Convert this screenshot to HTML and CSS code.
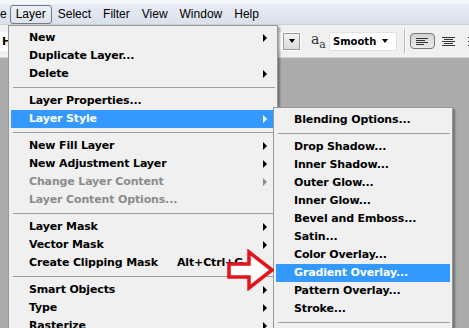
FILE: index.html
```html
<!DOCTYPE html>
<html lang="en">
<head>
  <meta charset="UTF-8">
  <title>Layer menu</title>
  <link rel="stylesheet" href="styles.css">
</head>
<body>
  <div class="app">
    <div class="titlebar"></div>
    <div class="menubar">
      <span class="mb-item cut">e</span>
      <span class="mb-item active">Layer</span>
      <span class="mb-item">Select</span>
      <span class="mb-item">Filter</span>
      <span class="mb-item">View</span>
      <span class="mb-item">Window</span>
      <span class="mb-item">Help</span>
    </div>
    <div class="toolbar">
      <div class="tool-box">H</div>
      <div class="spacer"></div>
      <div class="size-select">
        <span class="drop-btn"><i class="caret"></i></span>
      </div>
      <div class="aa">a<sub>a</sub></div>
      <div class="smooth-select">
        <span>Smooth</span>
        <i class="caret"></i>
      </div>
      <div class="tool-sep"></div>
      <div class="align-btn pressed">
        <svg width="17" height="9" viewBox="0 0 17 9"><path d="M2 1.5h12M2 3.5h9M2 5.5h12M2 7.5h8" stroke="#333" stroke-width="1"/></svg>
      </div>
      <div class="align-btn">
        <svg width="17" height="11" viewBox="0 0 17 11"><path d="M2 1.5h13M4 3.5h9M2 5.5h13M4 7.5h9M2 9.5h13" stroke="#333" stroke-width="1"/></svg>
      </div>
      <div class="align-btn">
        <svg width="17" height="11" viewBox="0 0 17 11"><path d="M2 1.5h13M6 3.5h9M2 5.5h13M6 7.5h9M2 9.5h13" stroke="#333" stroke-width="1"/></svg>
      </div>
    </div>
    <div class="workspace"></div>
  </div>

  <div class="menu main-menu">
    <div class="row sub">New</div>
    <div class="row">Duplicate Layer...</div>
    <div class="row sub">Delete</div>
    <div class="sep"></div>
    <div class="row">Layer Properties...</div>
    <div class="row sub selected">Layer Style</div>
    <div class="sep"></div>
    <div class="row sub">New Fill Layer</div>
    <div class="row sub">New Adjustment Layer</div>
    <div class="row sub disabled">Change Layer Content</div>
    <div class="row disabled">Layer Content Options...</div>
    <div class="sep"></div>
    <div class="row sub">Layer Mask</div>
    <div class="row sub">Vector Mask</div>
    <div class="row">Create Clipping Mask<span class="shortcut">Alt+Ctrl+G</span></div>
    <div class="sep"></div>
    <div class="row sub">Smart Objects</div>
    <div class="row sub">Type</div>
    <div class="row sub">Rasterize</div>
  </div>

  <div class="menu style-menu">
    <div class="row">Blending Options...</div>
    <div class="sep"></div>
    <div class="row">Drop Shadow...</div>
    <div class="row">Inner Shadow...</div>
    <div class="row">Outer Glow...</div>
    <div class="row">Inner Glow...</div>
    <div class="row">Bevel and Emboss...</div>
    <div class="row">Satin...</div>
    <div class="row">Color Overlay...</div>
    <div class="row selected">Gradient Overlay...</div>
    <div class="row">Pattern Overlay...</div>
    <div class="row">Stroke...</div>
    <div class="sep"></div>
  </div>

  <svg class="pointer" width="50" height="42" viewBox="0 0 50 42">
    <path d="M5 15H25V3L48 21L25 39V28H5Z" fill="#fff" stroke="#e3141b" stroke-width="3.5" stroke-linejoin="miter"/>
  </svg>
</body>
</html>
```

FILE: styles.css
```css
body {
  margin: 0;
  width: 469px;
  height: 328px;
  overflow: hidden;
  position: relative;
  font-family: "DejaVu Sans", sans-serif;
  font-size: 11px;
  color: #000;
}
.app {
  display: flex;
  flex-direction: column;
  height: 328px;
}
.titlebar {
  height: 4px;
  background: #f4f6fa;
}
.menubar {
  height: 21px;
  display: flex;
  align-items: center;
  background: linear-gradient(#e7ecf4, #dae1eb);
  border-bottom: 1px solid #c9d0da;
  box-sizing: border-box;
  font-family: "Liberation Sans", sans-serif;
  font-size: 12px;
}
.mb-item {
  padding: 1px 5px 2px;
  margin-right: 0;
  border: 1px solid transparent;
}
.mb-item.cut {
  padding: 0;
  margin-left: -1px;
  margin-right: 2px;
}
.mb-item.active {
  border-color: #6f7b8b;
  border-radius: 3px;
  background: linear-gradient(#eef1f5, #dfe4ea);
}
.toolbar {
  height: 33px;
  display: flex;
  align-items: center;
  background: #f0f0f0;
  border-bottom: 1px solid #d5d5d5;
  box-sizing: border-box;
  overflow: hidden;
}
.toolbar > * {
  flex-shrink: 0;
}
.tool-box {
  width: 8px;
  height: 19px;
  background: #fff;
  font-weight: bold;
  line-height: 19px;
  padding-left: 2px;
  box-sizing: border-box;
}
.spacer {
  width: 270px;
}
.size-select {
  width: 23px;
  height: 19px;
  background: #fff;
  display: flex;
  justify-content: flex-end;
}
.drop-btn {
  width: 17px;
  height: 17px;
  margin: 1px;
  border: 1px solid #9a9a9a;
  background: linear-gradient(#f2f2f2, #dcdcdc);
  box-sizing: border-box;
  display: flex;
  align-items: center;
  justify-content: center;
}
.caret {
  width: 0;
  height: 0;
  border-left: 3px solid transparent;
  border-right: 3px solid transparent;
  border-top: 4px solid #000;
}
.aa {
  margin-left: 10px;
  width: 16px;
  font-family: "DejaVu Serif", serif;
  font-size: 14px;
  color: #333;
}
.aa sub {
  font-size: 11px;
}
.smooth-select {
  margin-left: 2px;
  width: 68px;
  height: 19px;
  background: #fff;
  border: 1px solid #e2e2e2;
  box-sizing: border-box;
  display: flex;
  align-items: center;
  justify-content: space-between;
  padding: 0 8px 0 3px;
  font-weight: bold;
  font-size: 10px;
}
.tool-sep {
  width: 1px;
  height: 24px;
  margin: 0 4px 0 7px;
  background: #b8b8b8;
  border-right: 1px solid #fff;
}
.align-btn {
  width: 25px;
  height: 16px;
  display: flex;
  align-items: center;
  justify-content: center;
  margin-right: 1px;
  border: 1px solid transparent;
  box-sizing: border-box;
}
.align-btn.pressed {
  border-color: #777;
  border-radius: 4px;
  background: linear-gradient(#d4d4d4, #ececec);
}
.workspace {
  flex: 1;
  background: #acacac;
}

.menu {
  position: absolute;
  background: #f0f0f0;
  border: 1px solid #979797;
  box-shadow: 2px 2px 2px rgba(0, 0, 0, 0.35);
  padding-top: 3px;
  font-weight: bold;
}
.main-menu {
  left: 8px;
  top: 25px;
  width: 268px;
  height: 320px;
}
.style-menu {
  left: 273px;
  top: 107px;
  width: 178px;
  height: 240px;
}
.row {
  height: 18px;
  line-height: 18px;
  padding-left: 18px;
  margin: 0 2px;
  position: relative;
  white-space: nowrap;
  letter-spacing: -0.15px;
}
.row.selected {
  background: #3399ff;
  color: #fff;
}
.row.disabled {
  color: #8b8b8b;
}
.row.sub::after {
  content: "";
  position: absolute;
  right: 8px;
  top: 5px;
  border-top: 4px solid transparent;
  border-bottom: 4px solid transparent;
  border-left: 4px solid #000;
}
.row.sub.selected::after {
  border-left-color: #fff;
}
.row.sub.disabled::after {
  border-left-color: #8b8b8b;
}
.shortcut {
  position: absolute;
  left: 166px;
}
.sep {
  height: 1px;
  margin: 4px 2px 4px 4px;
  background: #a0a0a0;
}
.pointer {
  position: absolute;
  left: 224px;
  top: 249px;
}
```
